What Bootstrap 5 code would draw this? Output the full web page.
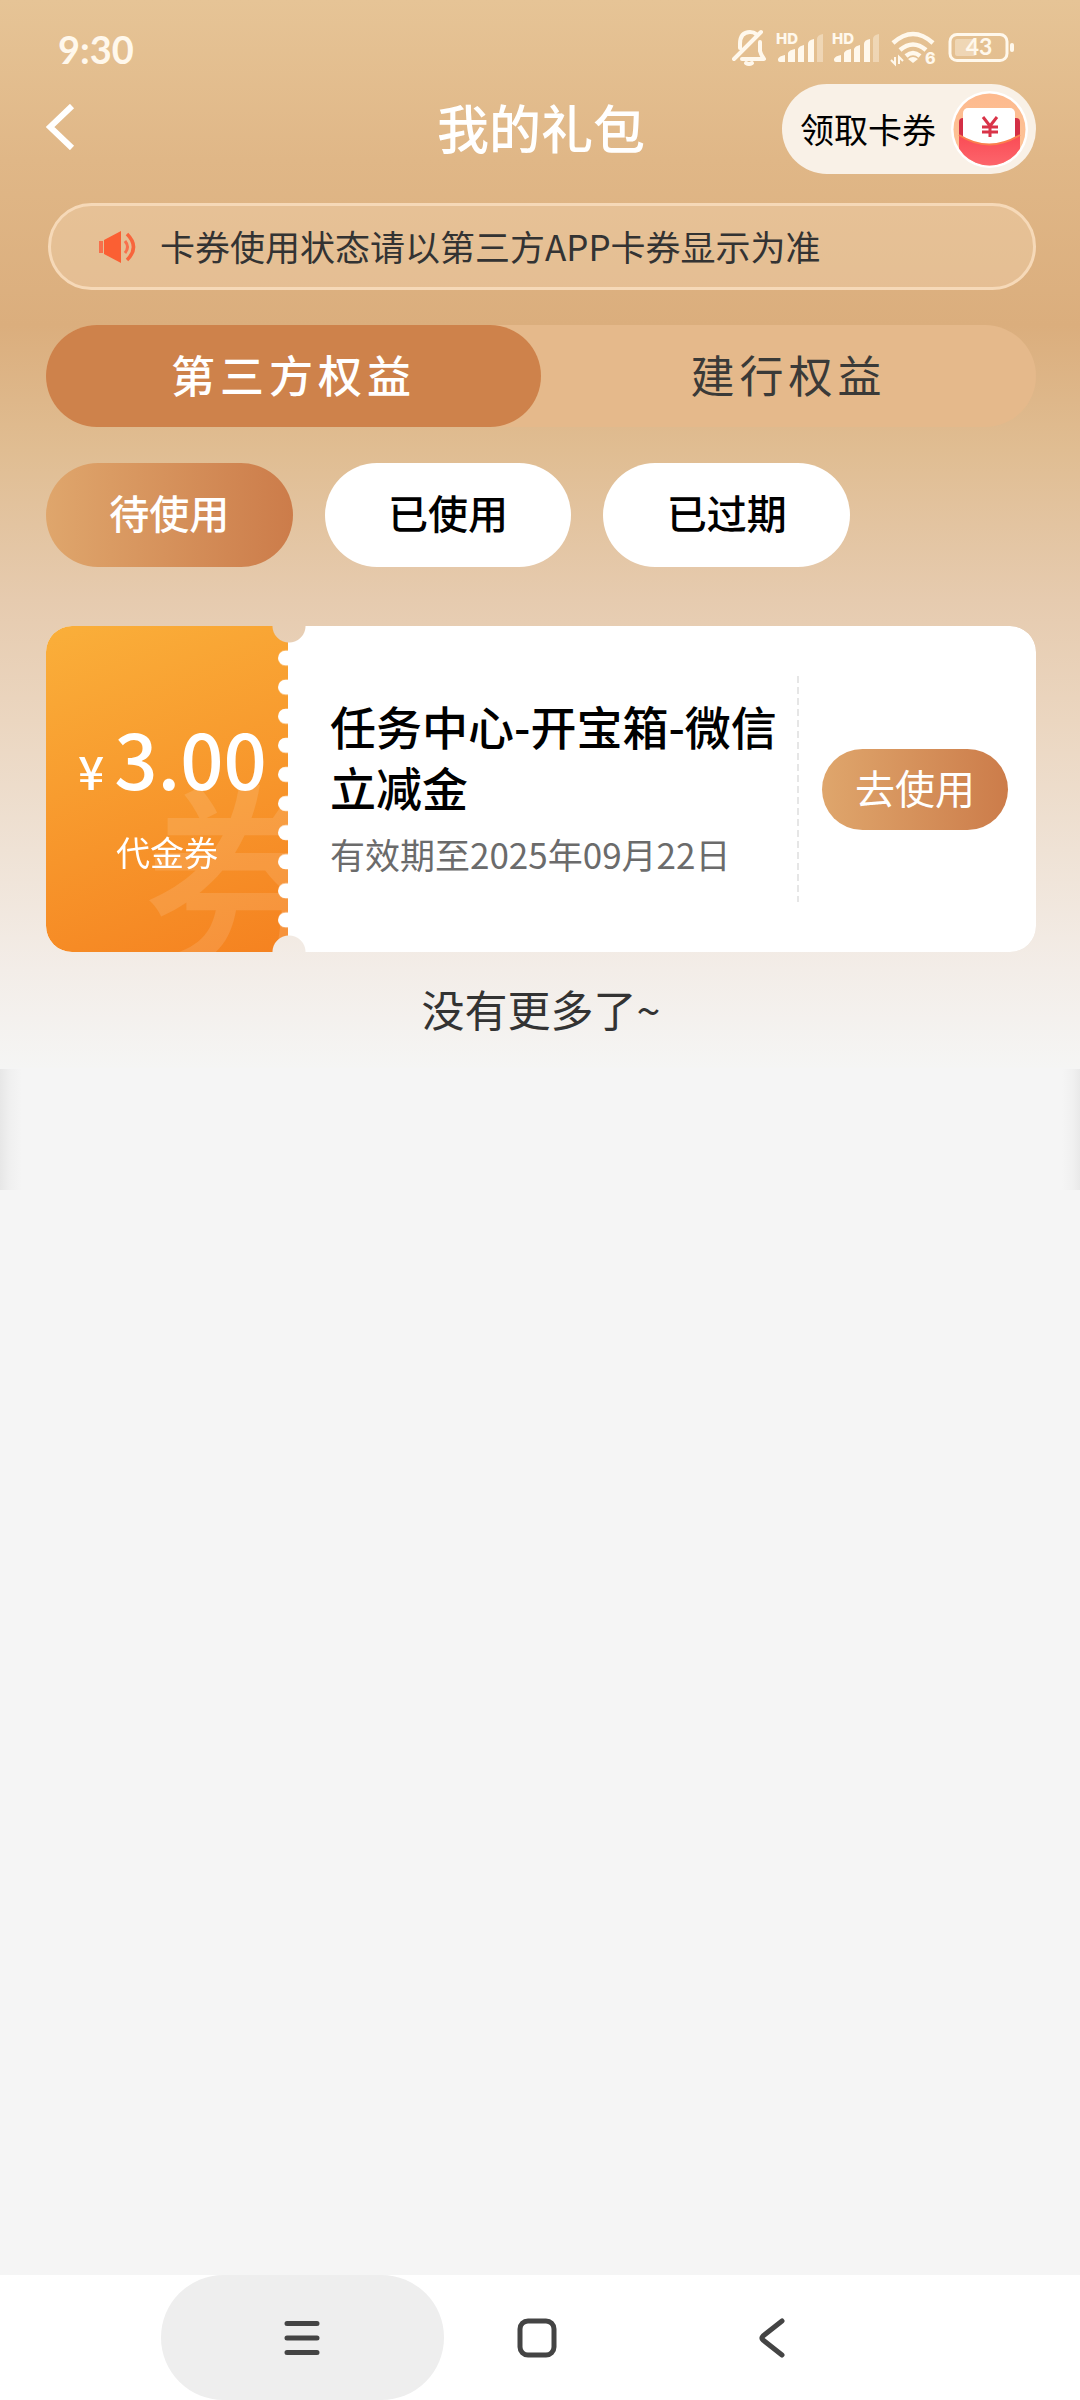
<!DOCTYPE html>
<html lang="zh-CN">
<head>
<meta charset="utf-8">
<meta name="viewport" content="width=device-width, initial-scale=1">
<title>我的礼包</title>
<link href="https://cdn.jsdelivr.net/npm/bootstrap@5.3.0/dist/css/bootstrap.min.css" rel="stylesheet">
<style>
  body {
    font-family: "Noto Sans CJK SC", "Noto Sans", sans-serif;
    background: #f5f5f5;
    color: #333;
  }
  .gift-page {
    background: linear-gradient(180deg, #e6c496 0, #e0b787 160px, #dbae7d 325px, #e0bd92 450px, #e6cbaf 600px, #ebd6c0 720px, #efe2d5 850px, #f3ede8 970px, #f5f5f4 1068px) no-repeat 0 0 / 100% 1068px;
  }
  .gutter { padding-left: 46px; padding-right: 44px; }
  .status-bar { height: 84px; padding: 32px 62px 18px 58px; color: #fff8ec; }
  .clock { font-family: Lato, sans-serif; font-size: 38px; line-height: 40px; font-weight: 700; }
  .top-row { height: 90px; }
  .page-title { font-size: 52px; line-height: 60px; padding-bottom: 4px; font-weight: 500; color: #fff; }
  .claim { height: 90px; padding: 0 8px 0 18px; border: 0; border-radius: 45px; background: #f9f1e7; font-size: 34px; line-height: 40px; color: #000; gap: 15px; }
  .notice { height: 87px; margin: 29px 0 0 2px; padding-left: 48px; border: 3px solid #f6d9b8; border-radius: 44px; background: rgba(243, 213, 177, .4); font-size: 35px; line-height: 40px; gap: 24px; }
  .notice span { padding-bottom: 2px; }
  .kinds { height: 102px; margin-top: 35px; border-radius: 51px; background: #e5b98b; flex-wrap: nowrap; }
  .kinds .nav-link { height: 102px; padding: 0; border-radius: 51px; font-size: 44px; line-height: 98px; letter-spacing: 5px; color: #3a3a38; }
  .kinds .nav-link.active { background: #ce824b; color: #fff; font-weight: 500; }
  .states { margin-top: 36px; gap: 32px; padding-right: 186px; }
  .state-btn { height: 104px; padding: 0 0 6px; border: 0; border-radius: 52px; background: #fff; color: #000; font-size: 40px; line-height: 98px; font-weight: 500; }
  .state-btn.chosen, .use-btn { background: linear-gradient(90deg, #dfa66c, #cc7c4a); color: #fff; }
  .ticket { height: 326px; margin-top: 59px; border-radius: 26px; background: #fff; overflow: hidden;
    -webkit-mask: radial-gradient(circle 17px at 243px 0, transparent 16px, #000 17px) top / 100% 50% no-repeat, radial-gradient(circle 17px at 243px 100%, transparent 16px, #000 17px) bottom / 100% 50% no-repeat;
    mask: radial-gradient(circle 17px at 243px 0, transparent 16px, #000 17px) top / 100% 50% no-repeat, radial-gradient(circle 17px at 243px 100%, transparent 16px, #000 17px) bottom / 100% 50% no-repeat; }
  .worth { width: 242px; flex: none; background: linear-gradient(160deg, #faaf3a, #f58220); color: #fff; overflow: hidden; padding-top: 83px; }
  .watermark { left: 97px; top: 140px; font-size: 204px; line-height: 204px; font-weight: 500; color: rgba(255, 255, 255, .12); }
  .perforation { right: 0; top: 0; width: 10px; height: 326px; }
  .amount { font-size: 76px; line-height: 96px; font-weight: 500; padding-left: 32px; gap: 10px; }
  .amount small { font-size: 46px; }
  .worth-kind { font-size: 34px; line-height: 40px; padding-top: 14px; }
  .info { padding-left: 42px; padding-bottom: 8px; }
  .info h2 { font-size: 46px; line-height: 61px; font-weight: 500; color: #000; margin: 0; }
  .info p { font-size: 35px; line-height: 42px; color: #6b6b6b; margin: 16px 0 0; }
  .tear-line { width: 2px; height: 226px; flex: none; background: repeating-linear-gradient(180deg, #e6e6e6 0 7px, transparent 7px 11px); }
  .use-btn { width: 186px; height: 81px; margin: 0 28px 0 23px; padding: 0 0 5px; border: 0; border-radius: 41px; font-size: 40px; line-height: 76px; flex: none; }
  .list-end { font-size: 43px; line-height: 60px; padding: 26px 0; margin: 0; height: 117px; color: #333; }
  .edge-shade { height: 121px; background: linear-gradient(90deg, #e7e7e7, #f0f0f0 10px, transparent 22px, transparent calc(100% - 18px), #f0f0f0 calc(100% - 7px), #e9e9e9); }
  .sys-nav { height: 125px; background: #fff; padding-left: 161px; padding-right: 167px; }
  .sys-nav .btn { height: 125px; padding: 0; border: 0; border-radius: 63px; }
  .sys-nav .recent { width: 283px; background: #eee; }
  .sys-nav .home-key { width: 186px; }
  .sys-nav .back-key { width: 283px; }
</style>
</head>
<body>
<div class="min-vh-100 d-flex flex-column">
  <main class="gift-page flex-grow-1">
    <div class="status-bar d-flex justify-content-between align-items-center">
      <span class="clock">9:30</span>
      <svg width="286" height="40" viewBox="732 31 286 40" fill="#fff8ec" stroke="none" role="img" aria-label="状态图标">
        <g fill="none" stroke="#fff8ec" stroke-width="4" stroke-linecap="round" stroke-linejoin="round">
          <path d="M761 34 734 61M740 50V46Q740 34 750 34Q754 34 756 36M760 44V53Q761 57 764 61H742"/>
          <path d="M746 65Q749 67 752 65"/>
        </g>
        <text x="776" y="46" font-family="Inter, sans-serif" font-size="15" font-weight="800">HD</text>
        <text x="832" y="46" font-family="Inter, sans-serif" font-size="15" font-weight="800">HD</text>
        <g id="bars">
          <path d="M778 61Q779 58 785 57V64H780Q778 64 778 62ZM788 55Q789 52 795 51V64H788ZM798 51Q799 48 804 47V64H798ZM808 46Q808 42 814 41V64H808Z"/>
          <path d="M817 41Q817 37 823 36V64H817Z" opacity=".4"/>
        </g>
        <use href="#bars" x="56"/>
        <g fill="none" stroke="#fff8ec" stroke-width="4.5">
          <path d="M893 45Q913 27 933 45M900 52Q913 41 926 52M906 58Q913 52 920 58"/>
        </g>
        <path d="M908 61Q913 57 918 61L913 65Z"/>
        <path d="M895 59V66L891 62M899 66V59L903 63" fill="none" stroke="#fff8ec" stroke-width="2"/>
        <text x="925" y="66" font-family="Inter, sans-serif" font-size="16" font-weight="800">6</text>
        <rect x="950" y="36.500" width="57" height="26" rx="7" fill="none" stroke="#fff8ec" stroke-width="3"/>
        <rect x="955" y="41" width="21" height="17" rx="2" opacity=".4"/>
        <rect x="1010" y="45" width="4" height="9" rx="2"/>
        <text x="979" y="57" text-anchor="middle" font-family="Lato, sans-serif" font-size="23" font-weight="700">43</text>
      </svg>
    </div>

    <div class="gutter">
      <header class="row g-0 top-row align-items-center">
        <div class="col">
          <a href="#" aria-label="返回" class="d-inline-block">
            <svg class="d-block" width="30" height="46" viewBox="0 0 30 46" fill="none" stroke="#fff" stroke-width="6"><path d="M26 2 4 23 26 44"/></svg>
          </a>
        </div>
        <div class="col-auto"><h1 class="page-title m-0">我的礼包</h1></div>
        <div class="col d-flex justify-content-end">
          <button type="button" class="claim btn d-flex align-items-center text-nowrap">领取卡券
            <svg width="77" height="77" viewBox="0 0 77 77" aria-hidden="true">
              <defs>
                <clipPath id="disc"><circle cx="38.500" cy="38.500" r="36"/></clipPath>
                <linearGradient id="peach" x2="0" y2="1"><stop stop-color="#fdb98d"/><stop offset="1" stop-color="#fdc79b"/></linearGradient>
                <linearGradient id="pocket" x2="0" y2="1"><stop stop-color="#fa4b55"/><stop offset="1" stop-color="#fd6a70"/></linearGradient>
              </defs>
              <circle cx="38.500" cy="38.500" r="38.500" fill="#fff"/>
              <g clip-path="url(#disc)">
                <rect width="77" height="77" fill="url(#peach)"/>
                <rect x="8" y="27" width="61" height="30" rx="4" fill="#d32f45"/>
                <rect x="12" y="17" width="52" height="42" rx="5" fill="#fff"/>
                <path d="M8 44Q38 63 69 44V80H8Z" fill="url(#pocket)"/>
                <path d="M8 44Q38 63 69 44" fill="none" stroke="#fb7f4d" stroke-width="2"/>
              </g>
              <path d="M32 26 39 35 46 26M31 36H47M31 41H47M39 35V46" fill="none" stroke="#d93348" stroke-width="3"/>
            </svg>
          </button>
        </div>
      </header>

      <div class="notice d-flex align-items-center" role="note">
        <svg width="37" height="34" viewBox="0 0 37 34" aria-hidden="true">
          <rect y="11" width="4" height="12" fill="#f8704c"/>
          <path d="M5 10 22 1V33L5 24Z" fill="#fb5f33"/>
          <path d="M26 11Q31 17 26 23" fill="none" stroke="#f8704c" stroke-width="3"/>
          <path d="M28 4Q41 17 28 30" fill="none" stroke="#f8653c" stroke-width="3.500"/>
        </svg>
        <span>卡券使用状态请以第三方APP卡券显示为准</span>
      </div>

      <nav class="nav nav-pills nav-fill kinds">
        <a class="nav-link w-50 active" href="#" aria-current="page">第三方权益</a>
        <a class="nav-link w-50" href="#">建行权益</a>
      </nav>

      <div class="states d-flex">
        <button type="button" class="state-btn chosen flex-fill">待使用</button>
        <button type="button" class="state-btn flex-fill">已使用</button>
        <button type="button" class="state-btn flex-fill">已过期</button>
      </div>

      <article class="ticket d-flex">
        <div class="worth position-relative">
          <span class="watermark position-absolute" aria-hidden="true">券</span>
          <div class="amount d-flex align-items-baseline position-relative"><small>¥</small><span>3.00</span></div>
          <div class="worth-kind text-center position-relative">代金券</div>
          <svg class="perforation position-absolute" viewBox="0 0 10 326" fill="#fff" aria-hidden="true">
            <defs><pattern id="teeth" width="10" height="29.100" y="17" patternUnits="userSpaceOnUse"><rect y="7.500" width="20" height="15" rx="7.500"/></pattern></defs>
            <rect y="17" width="10" height="291" fill="url(#teeth)"/>
          </svg>
        </div>
        <div class="info flex-grow-1 align-self-center">
          <h2>任务中心-开宝箱-微信立减金</h2>
          <p>有效期至2025年09月22日</p>
        </div>
        <div class="tear-line align-self-center"></div>
        <button type="button" class="use-btn align-self-center">去使用</button>
      </article>

      <p class="list-end text-center">没有更多了~</p>
    </div>
    <div class="edge-shade"></div>
  </main>

  <nav class="sys-nav d-flex justify-content-between align-items-center" aria-label="系统导航">
    <button type="button" class="btn recent" aria-label="最近任务">
      <svg width="40" height="40" viewBox="0 0 40 40" stroke="#444" stroke-width="5" stroke-linecap="round"><path d="M4 5.500H34M4 20H34M4 34.500H34"/></svg>
    </button>
    <button type="button" class="btn home-key" aria-label="主屏幕">
      <svg width="40" height="40" viewBox="0 0 40 40" fill="none" stroke="#444" stroke-width="5"><rect x="3" y="3" width="34" height="34" rx="8"/></svg>
    </button>
    <button type="button" class="btn back-key" aria-label="返回">
      <svg width="40" height="40" viewBox="0 0 40 40" fill="none" stroke="#444" stroke-width="5" stroke-linecap="round" stroke-linejoin="round"><path d="M30 3 11 18Q9 20 11 22L30 37"/></svg>
    </button>
  </nav>
</div>
<script src="https://cdn.jsdelivr.net/npm/bootstrap@5.3.0/dist/js/bootstrap.bundle.min.js"></script>
</body>
</html>
